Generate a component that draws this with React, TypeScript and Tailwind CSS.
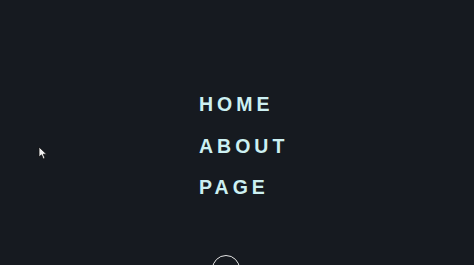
import React from 'react';

const links = ['HOME', 'ABOUT', 'PAGE'];

export default function App() {
  return (
    <div className="relative h-[265px] w-[474px] overflow-hidden bg-[#161a20]">
      {/* Nav links */}
      <nav className="flex flex-col items-start gap-[19.5px] pl-[199px] pt-[93px]">
        {links.map((l) => (
          <a
            key={l}
            href="#"
            className="text-[19.5px] font-bold leading-[22px] tracking-[4px] text-[#ccf0f2]"
            style={{ fontFamily: '"Liberation Sans", Arial, sans-serif' }}
          >
            {l}
          </a>
        ))}
      </nav>

      {/* Mouse cursor */}
      <svg className="absolute left-[38px] top-[146px]" width="10" height="14" viewBox="0 0 10 14">
        <path d="M1 1 L1 11 L3.5 8.8 L5.3 13 L7 12.2 L5.3 8.2 L8.6 8.2 Z" fill="#f2f2f2" stroke="#111" strokeWidth="0.8" />
      </svg>

      {/* Scroll indicator */}
      <div className="absolute left-[212px] top-[255px] h-[28px] w-[28px] rounded-full border-[1.5px] border-[#e6e6e6]" />
    </div>
  );
}
